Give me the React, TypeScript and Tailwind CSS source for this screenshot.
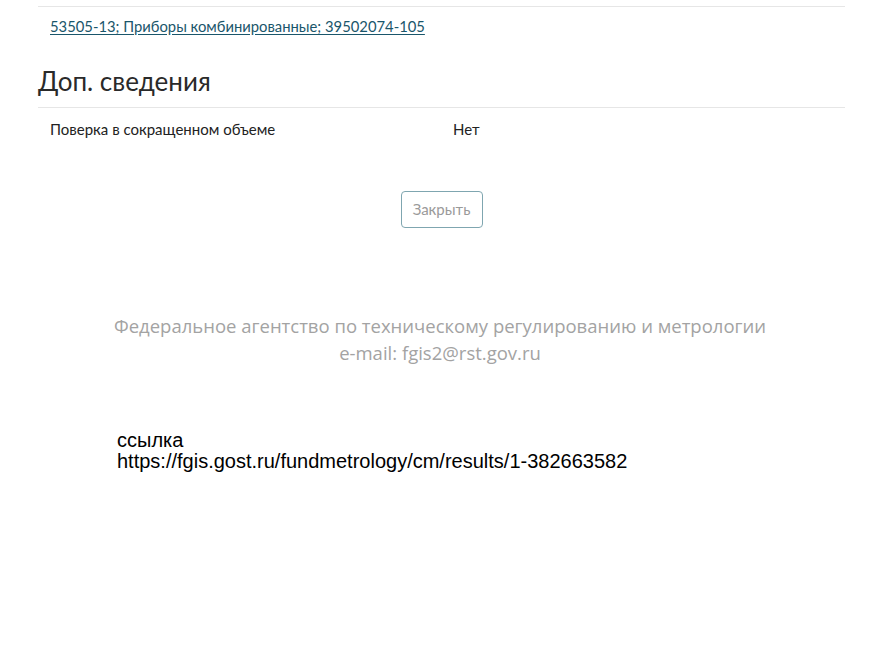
export default function App() {
  return (
    <div className="w-[880px] h-[660px] bg-white overflow-hidden" style={{ fontFamily: "Lato, 'Noto Sans', sans-serif" }}>
      <div className="ml-[38px] w-[807px] pt-[6px]">
        <div className="h-px bg-[#e6e6e6]" />
        <div className="pl-[12px] pt-[7px] h-[39px]">
          <a className="text-[14.8px] text-[#1a566b] underline underline-offset-2 leading-[18px]" href="#">
            53505-13; Приборы комбинированные; 39502074-105
          </a>
        </div>
        <h2 className="text-[26px] leading-[32px] text-[#2a2a2a] mt-[19px]">Доп. сведения</h2>
        <div className="h-px bg-[#e6e6e6] mt-[10px]" />
        <div className="flex pl-[12px] pt-[12px] text-[15px] leading-[18px] text-[#222]">
          <div className="w-[403px]">Поверка в сокращенном объеме</div>
          <div>Нет</div>
        </div>
      </div>
      <div className="flex justify-center mt-[53px]">
        <button className="w-[82px] h-[37px] border border-[#7fa6b0] rounded-[4px] text-[15px] text-[#9a9a9a] ml-[3px]">
          Закрыть
        </button>
      </div>
      <div className="mt-[84px] text-center text-[#a3a3a3] text-[18.5px] leading-[27px]" style={{ fontFamily: "'Open Sans', sans-serif" }}>
        <div>Федеральное агентство по техническому регулированию и метрологии</div>
        <div>e-mail: fgis2@rst.gov.ru</div>
      </div>
      <div className="ml-[117px] mt-[64px] text-[20px] leading-[21px] text-black" style={{ fontFamily: "'Liberation Sans', Arial, sans-serif" }}>
        <div>ссылка</div>
        <div>https://fgis.gost.ru/fundmetrology/cm/results/1-382663582</div>
      </div>
    </div>
  );
}
